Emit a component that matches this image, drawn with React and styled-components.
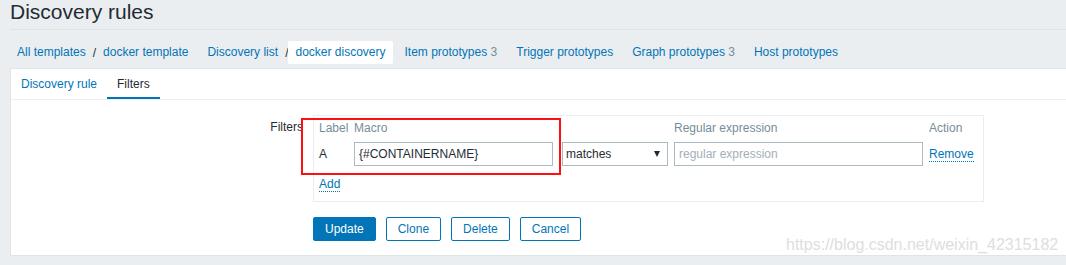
import React from "react";
import styled, { createGlobalStyle } from "styled-components";

const GlobalStyle = createGlobalStyle`
  html, body { margin: 0; padding: 0; background: #ebeef0; overflow: hidden; }
  body {
    font-family: "Liberation Sans", Arial, sans-serif;
    font-size: 12px;
    color: #1f2c33;
  }
  * { box-sizing: border-box; }
`;

const Page = styled.div`
  position: relative;
  width: 1066px;
  height: 265px;
  padding-left: 10px;
`;

const Header = styled.header`
  padding-bottom: 5px;
  border-bottom: 1px solid #dde3e6;
`;

const Title = styled.h1`
  margin: 0;
  font-size: 21px;
  line-height: 24px;
  font-weight: normal;
  color: #1f2c33;
`;

const Nav = styled.nav`
  display: flex;
  gap: 5px;
  padding: 11px 0 4px;
`;

const Group = styled.div`
  display: flex;
  align-items: center;
`;

const Crumb = styled.a`
  display: block;
  height: 23px;
  line-height: 23px;
  padding: 0 7px;
  color: #0275b8;
  text-decoration: none;
  white-space: nowrap;
  border-radius: 2px;
  background: ${(p) => (p.$selected ? "#fff" : "transparent")};
`;

const Count = styled.span`
  color: #768d99;
`;

const Sep = styled.span`
  color: #1f2c33;
`;

const Panel = styled.section`
  background: #fff;
  border: 1px solid #dfe4e7;
  border-right: none;
`;

const TabBar = styled.div`
  display: flex;
  height: 31px;
  border-bottom: 1px solid #ebeef0;
`;

const Tab = styled.a`
  display: block;
  height: 30px;
  line-height: 30px;
  padding: 0 10px;
  text-decoration: none;
  color: ${(p) => (p.$active ? "#1f2c33" : "#0275b8")};
  box-shadow: ${(p) => (p.$active ? "inset 0 -2px 0 #0275b8" : "none")};
`;

const FormBody = styled.div`
  padding: 15px 0 14px;
`;

const FormRow = styled.div`
  display: grid;
  grid-template-columns: 292px auto;
  column-gap: 10px;
`;

const FieldLabel = styled.label`
  text-align: right;
  padding-top: 5px;
  line-height: 14px;
`;

const FilterTable = styled.div`
  width: 671px;
  border: 1px solid #ebeef0;
  padding: 5px 10px 9px 5px;
  display: grid;
  grid-template-columns: 35px 208px 112px 255px 1fr;
  grid-template-rows: 21px 35px 15px;
  align-items: start;
`;

const HeadCell = styled.div`
  color: #768d99;
  line-height: 14px;
  white-space: nowrap;
`;

const Cell = styled.div`
  display: flex;
  align-items: center;
  height: 24px;
  white-space: nowrap;
`;

const TextInput = styled.input`
  width: ${(p) => p.$w}px;
  height: 24px;
  border: 1px solid #acbbc2;
  border-radius: 0;
  padding: 0 4px;
  font-family: inherit;
  font-size: 12px;
  color: #1f2c33;
  background: #fff;
  outline: none;
  &::placeholder { color: #a3b0b6; }
`;

const SelectBox = styled.div`
  width: 106px;
  height: 24px;
  border: 1px solid #acbbc2;
  padding: 0 7px 0 3px;
  display: flex;
  align-items: center;
  justify-content: space-between;
  color: #1f2c33;
`;

const Arrow = styled.span`
  width: 0;
  height: 0;
  border-left: 3px solid transparent;
  border-right: 3px solid transparent;
  border-top: 6px solid #1f2c33;
`;

const DottedLink = styled.a`
  color: #0275b8;
  text-decoration: none;
  line-height: 14px;
  border-bottom: 1px dotted #0275b8;
  cursor: pointer;
`;

const AddCell = styled.div`
  grid-column: 1 / span 2;
  line-height: 14px;
`;

const ButtonRow = styled.div`
  display: flex;
  gap: 10px;
  margin: 15px 0 0 302px;
`;

const Button = styled.button`
  height: 24px;
  padding: 0 11px;
  border: 1px solid #0275b8;
  border-radius: 2px;
  font-family: inherit;
  font-size: 12px;
  background: ${(p) => (p.$primary ? "#0275b8" : "#fff")};
  color: ${(p) => (p.$primary ? "#fff" : "#0275b8")};
  cursor: pointer;
`;

const Annotation = styled.div`
  position: absolute;
  left: 301px;
  top: 118px;
  width: 260px;
  height: 57px;
  border: 2px solid #ff1010;
  pointer-events: none;
`;

const Watermark = styled.div`
  position: absolute;
  left: 786px;
  top: 236px;
  font-size: 16px;
  line-height: 18px;
  color: #dedede;
  pointer-events: none;
`;

export default function App() {
  return (
    <>
      <GlobalStyle />
      <Page>
        <Header>
          <Title>Discovery rules</Title>
        </Header>
        <Nav>
          <Group>
            <Crumb>All templates</Crumb>
            <Sep>/</Sep>
            <Crumb>docker template</Crumb>
          </Group>
          <Group>
            <Crumb>Discovery list</Crumb>
            <Sep>/</Sep>
            <Crumb $selected>docker discovery</Crumb>
          </Group>
          <Group>
            <Crumb>
              Item prototypes <Count>3</Count>
            </Crumb>
          </Group>
          <Group>
            <Crumb>Trigger prototypes</Crumb>
          </Group>
          <Group>
            <Crumb>
              Graph prototypes <Count>3</Count>
            </Crumb>
          </Group>
          <Group>
            <Crumb>Host prototypes</Crumb>
          </Group>
        </Nav>
        <Panel>
          <TabBar>
            <Tab>Discovery rule</Tab>
            <Tab $active>Filters</Tab>
          </TabBar>
          <FormBody>
            <FormRow>
              <FieldLabel>Filters</FieldLabel>
              <FilterTable>
                <HeadCell>Label</HeadCell>
                <HeadCell>Macro</HeadCell>
                <HeadCell />
                <HeadCell>Regular expression</HeadCell>
                <HeadCell>Action</HeadCell>

                <Cell>A</Cell>
                <Cell>
                  <TextInput $w={199} defaultValue="{#CONTAINERNAME}" />
                </Cell>
                <Cell>
                  <SelectBox>
                    <span>matches</span>
                    <Arrow />
                  </SelectBox>
                </Cell>
                <Cell>
                  <TextInput $w={249} placeholder="regular expression" />
                </Cell>
                <Cell>
                  <DottedLink>Remove</DottedLink>
                </Cell>

                <AddCell>
                  <DottedLink>Add</DottedLink>
                </AddCell>
              </FilterTable>
            </FormRow>
            <ButtonRow>
              <Button $primary>Update</Button>
              <Button>Clone</Button>
              <Button>Delete</Button>
              <Button>Cancel</Button>
            </ButtonRow>
          </FormBody>
        </Panel>
        <Annotation />
        <Watermark>https://blog.csdn.net/weixin_42315182</Watermark>
      </Page>
    </>
  );
}
